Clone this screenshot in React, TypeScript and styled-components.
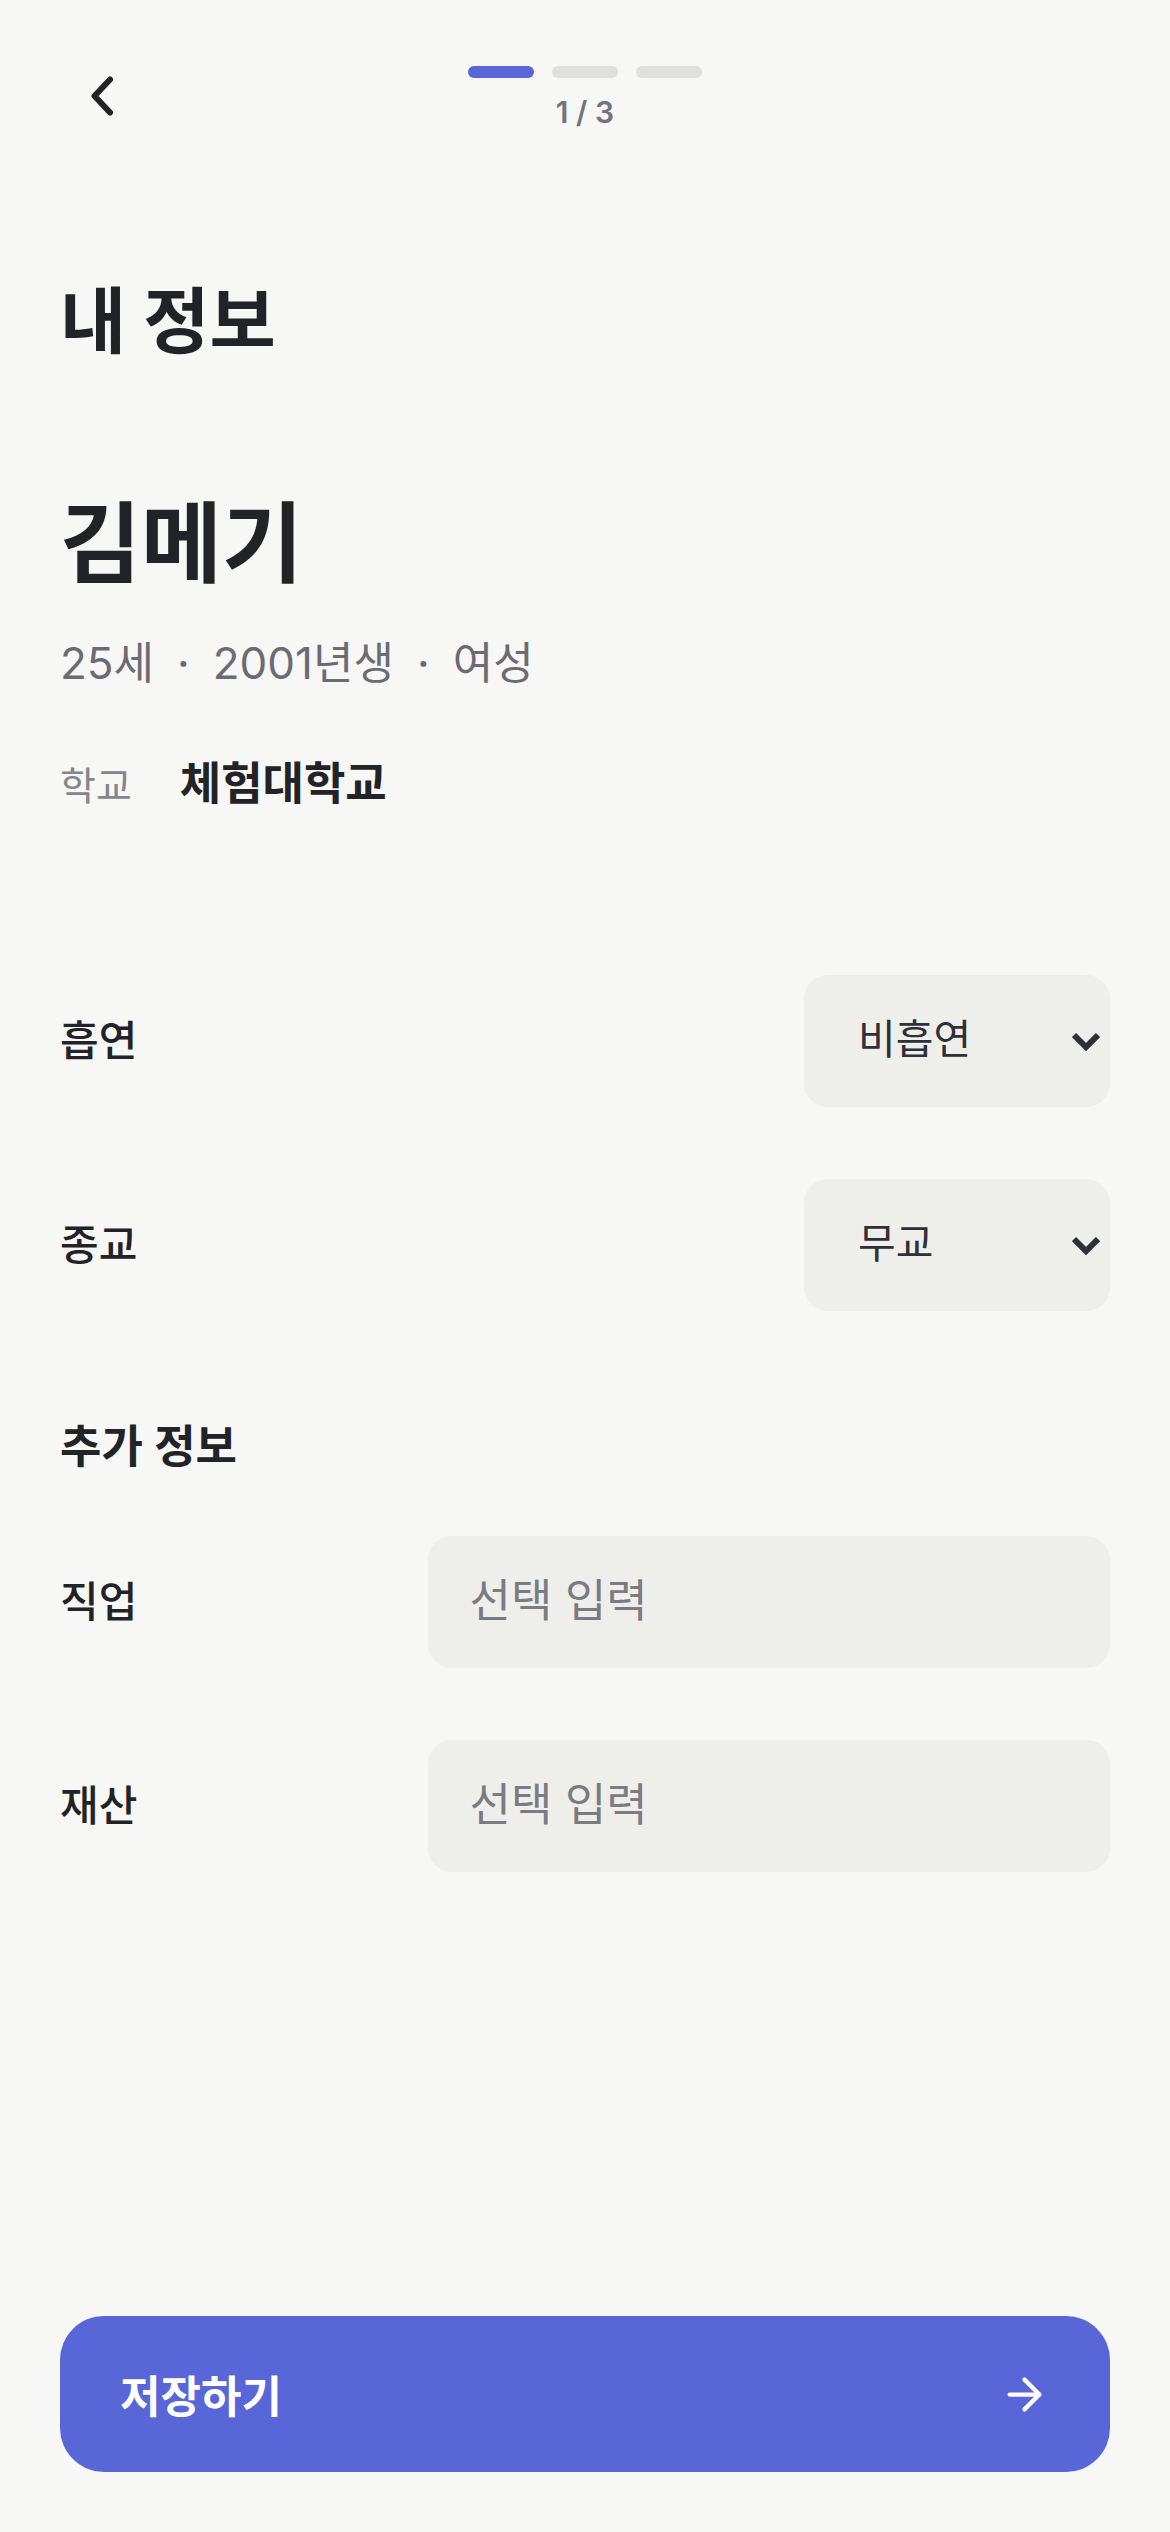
import React, { useState } from 'react';
import styled, { createGlobalStyle } from 'styled-components';
import { ArrowRight } from 'lucide-react';

const TOTAL_STEPS = 3;

const MyInfo = () => {
  const [step] = useState(1);
  const [smoking, setSmoking] = useState('비흡연');
  const [religion, setReligion] = useState('무교');
  const [job, setJob] = useState('');
  const [asset, setAsset] = useState('');

  const handleSubmit = (e: React.FormEvent) => {
    e.preventDefault();
  };

  return (
    <Wrapper>
      <GlobalStyle />
      <Header>
        <BackButton type="button" aria-label="뒤로">
          <svg width="84" height="84" viewBox="0 0 84 84" fill="none">
            <path
              d="M50 25.5 34.5 42 50 58.5"
              stroke="#222224"
              strokeWidth="6"
              strokeLinecap="round"
              strokeLinejoin="round"
            />
          </svg>
        </BackButton>
        <Progress>
          <Bars>
            {Array.from({ length: TOTAL_STEPS }, (_, i) => (
              <Bar key={i} $active={i < step} />
            ))}
          </Bars>
          <StepText>
            {step} / {TOTAL_STEPS}
          </StepText>
        </Progress>
      </Header>

      <Form onSubmit={handleSubmit}>
        <Title>내 정보</Title>

        <Name>김메기</Name>
        <Meta>
          <span>25세</span>
          <span>·</span>
          <span>2001년생</span>
          <span>·</span>
          <span>여성</span>
        </Meta>
        <School>
          <dt>학교</dt>
          <dd>체험대학교</dd>
        </School>

        <Rows>
          <Row>
            <Label htmlFor="smoking">흡연</Label>
            <SelectBox>
              <Select
                id="smoking"
                value={smoking}
                onChange={(e) => setSmoking(e.target.value)}
              >
                <option>비흡연</option>
                <option>흡연</option>
              </Select>
              <Chevron />
            </SelectBox>
          </Row>
          <Row>
            <Label htmlFor="religion">종교</Label>
            <SelectBox>
              <Select
                id="religion"
                value={religion}
                onChange={(e) => setReligion(e.target.value)}
              >
                <option>무교</option>
                <option>기독교</option>
                <option>천주교</option>
                <option>불교</option>
              </Select>
              <Chevron />
            </SelectBox>
          </Row>
        </Rows>

        <SubTitle>추가 정보</SubTitle>
        <Rows>
          <Row>
            <Label htmlFor="job">직업</Label>
            <Input
              id="job"
              placeholder="선택 입력"
              value={job}
              onChange={(e) => setJob(e.target.value)}
            />
          </Row>
          <Row>
            <Label htmlFor="asset">재산</Label>
            <Input
              id="asset"
              placeholder="선택 입력"
              value={asset}
              onChange={(e) => setAsset(e.target.value)}
            />
          </Row>
        </Rows>

        <SaveButton type="submit">
          저장하기
          <ArrowRight size={51} strokeWidth={2} />
        </SaveButton>
      </Form>
    </Wrapper>
  );
};

const Chevron = () => (
  <ChevronIcon width="28" height="20" viewBox="0 0 28 20" fill="none">
    <path d="M2 3 14 15 26 3" stroke="#2f3037" strokeWidth="6" />
  </ChevronIcon>
);

const GlobalStyle = createGlobalStyle`
  * {
    box-sizing: border-box;
  }

  body {
    margin: 0;
    background: #f7f7f5;
    color: #222326;
  }

  body, button, input, select {
    font-family: Inter, 'Noto Sans CJK KR', sans-serif;
  }
`;

const Wrapper = styled.div`
  display: flex;
  flex-direction: column;
  min-height: 100vh;
  padding: 54px 60px 60px;
`;

const Header = styled.header`
  display: grid;
  grid-template-columns: 84px 1fr 84px;
`;

const BackButton = styled.button`
  display: flex;
  width: 84px;
  height: 84px;
  padding: 0;
  border: none;
  background: none;
  cursor: pointer;
`;

const Progress = styled.div`
  display: flex;
  flex-direction: column;
  align-items: center;
  gap: 16px;
  padding-top: 12px;
`;

const Bars = styled.div`
  display: flex;
  gap: 18px;
`;

const Bar = styled.div<{ $active: boolean }>`
  width: 66px;
  height: 12px;
  border-radius: 6px;
  background: ${({ $active }) => ($active ? '#5966d8' : '#dfe0dc')};
`;

const StepText = styled.span`
  color: #73747b;
  font-size: 30px;
  font-weight: 600;
  line-height: 36px;
`;

const Form = styled.form`
  display: flex;
  flex: 1;
  flex-direction: column;
`;

const Title = styled.h1`
  margin: 135px 0 0;
  font-size: 72px;
  font-weight: 700;
  line-height: 96px;
`;

const Name = styled.h2`
  margin: 120px 0 0;
  font-size: 88px;
  font-weight: 700;
  line-height: 108px;
`;

const Meta = styled.div`
  display: flex;
  gap: 23px;
  margin-top: 36px;
  color: #6b6b73;
  font-size: 44px;
  line-height: 60px;
`;

const School = styled.dl`
  display: flex;
  align-items: baseline;
  gap: 48px;
  margin: 61px 0 159px;
  line-height: 60px;

  dt {
    color: #85868b;
    font-size: 39px;
  }

  dd {
    margin: 0;
    font-size: 45px;
    font-weight: 600;
  }
`;

const Rows = styled.div`
  display: flex;
  flex-direction: column;
  gap: 72px;
`;

const Row = styled.div`
  display: flex;
  align-items: center;
  justify-content: space-between;
`;

const Label = styled.label`
  font-size: 42px;
  font-weight: 500;
  line-height: 60px;
`;

const SelectBox = styled.div`
  position: relative;
  width: 306px;
`;

const Select = styled.select`
  display: block;
  width: 100%;
  height: 132px;
  padding: 0 60px 4px 54px;
  border: none;
  border-radius: 24px;
  background: #eeefea;
  color: #2f3037;
  font-size: 41px;
  appearance: none;
`;

const ChevronIcon = styled.svg`
  position: absolute;
  top: 57px;
  right: 10px;
  pointer-events: none;
`;

const SubTitle = styled.h3`
  margin: 106px 0 59px;
  font-size: 45px;
  font-weight: 600;
  line-height: 60px;
`;

const Input = styled.input`
  width: 65%;
  height: 132px;
  padding: 0 42px 4px;
  border: none;
  border-radius: 24px;
  background: #eeefea;
  color: #2f3037;
  font-size: 45px;

  &::placeholder {
    color: #7b7b82;
  }
`;

const SaveButton = styled.button`
  display: flex;
  align-items: center;
  justify-content: space-between;
  height: 156px;
  margin-top: auto;
  padding: 0 60px;
  border: none;
  border-radius: 44px;
  background: #5966d8;
  color: #fff;
  font-size: 44px;
  font-weight: 700;
  cursor: pointer;
`;

export default MyInfo;
